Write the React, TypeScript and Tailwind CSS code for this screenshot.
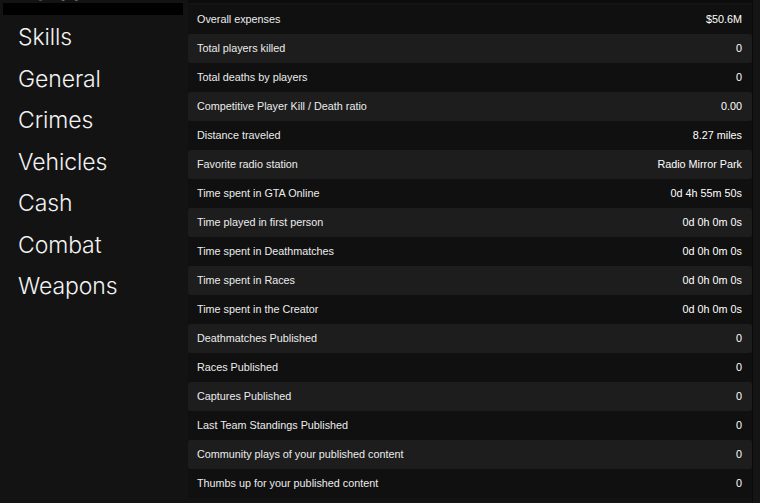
import React from "react";

let menu = ["Skills", "General", "Crimes", "Vehicles", "Cash", "Combat", "Weapons"];

let stats: [string, string][] = [
  ["Overall expenses", "$50.6M"],
  ["Total players killed", "0"],
  ["Total deaths by players", "0"],
  ["Competitive Player Kill / Death ratio", "0.00"],
  ["Distance traveled", "8.27 miles"],
  ["Favorite radio station", "Radio Mirror Park"],
  ["Time spent in GTA Online", "0d 4h 55m 50s"],
  ["Time played in first person", "0d 0h 0m 0s"],
  ["Time spent in Deathmatches", "0d 0h 0m 0s"],
  ["Time spent in Races", "0d 0h 0m 0s"],
  ["Time spent in the Creator", "0d 0h 0m 0s"],
  ["Deathmatches Published", "0"],
  ["Races Published", "0"],
  ["Captures Published", "0"],
  ["Last Team Standings Published", "0"],
  ["Community plays of your published content", "0"],
  ["Thumbs up for your published content", "0"],
];

let App: React.FC = () => {
  return (
    <div className="w-[760px] h-[503px] bg-[#131313] overflow-hidden flex font-['Liberation_Sans',sans-serif]">
      <div className="w-[188px] flex flex-col">
        <div className="h-[17px] relative overflow-hidden">
          <span className="absolute left-[19px] bottom-[11px] text-[23px] leading-[28px] text-[#d8d6a8] font-['Inter',sans-serif] font-light">
            Career
          </span>
          <div className="relative mt-[3px] ml-[3px] w-[180px] h-[12px] bg-black" />
        </div>
        {menu.map((item) => (
          <div
            key={item}
            className="h-[41.5px] leading-[41.5px] pl-[18px] text-[23px] text-[#f2f2f2] font-['Inter',sans-serif] font-light tracking-[-0.1px]"
          >
            {item}
          </div>
        ))}
      </div>

      <div className="w-[564px] flex flex-col pt-[2px] border-t-[3px] border-[#0c0c0c]">
        {stats.map(([label, value], i) => (
          <div
            key={label}
            className={
              "h-[29px] shrink-0 flex items-center justify-between pl-[9px] pr-[10px] text-[10.8px] rounded-[3px] " +
              (i % 2 === 1 ? "bg-[#1d1d1d]" : "bg-[#101010]")
            }
          >
            <span className="text-[#ececec]">{label}</span>
            <span className="text-white">{value}</span>
          </div>
        ))}
      </div>

      <div className="w-[8px] border-l border-[#0a0a0a] bg-[#151515]" />
    </div>
  );
};

export default App;
